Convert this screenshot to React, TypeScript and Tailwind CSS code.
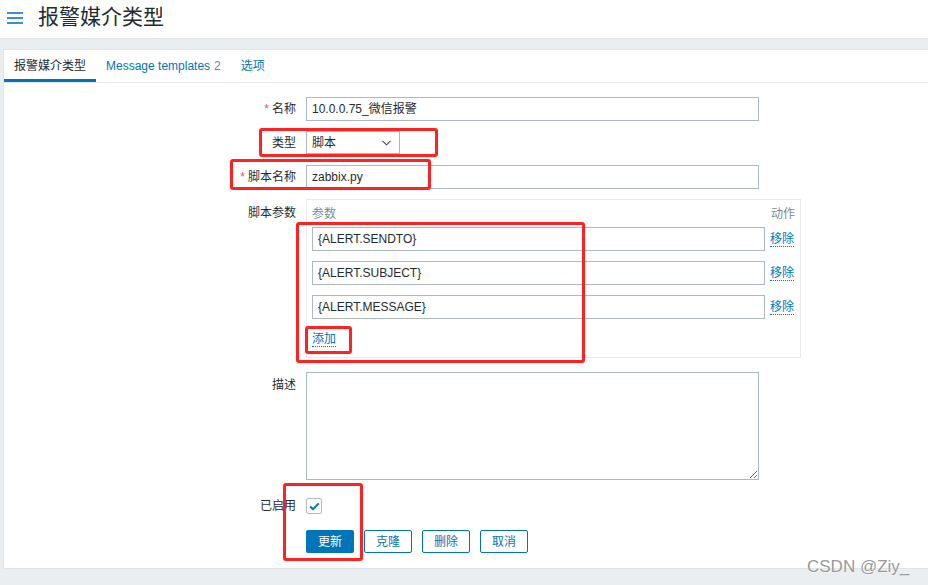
import React from 'react'

const params = ['{ALERT.SENDTO}', '{ALERT.SUBJECT}', '{ALERT.MESSAGE}']

const redBoxes = [
  'left-[259px] top-[128px] w-[179px] h-[29px]',
  'left-[230px] top-[159px] w-[201px] h-[31px]',
  'left-[296px] top-[222px] w-[289px] h-[141px]',
  'left-[305px] top-[326px] w-[47px] h-[28px]',
  'left-[283px] top-[483px] w-[80px] h-[78px]',
]

function Label({ text, required }: { text: string; required?: boolean }) {
  return (
    <div className="w-[302px] shrink-0 pr-[10px] text-right text-[12px] text-[#1f2c33]">
      {required && <span className="mr-[3px] text-[#e45959]">*</span>}
      {text}
    </div>
  )
}

function Input({ value, w = 'w-[453px]' }: { value: string; w?: string }) {
  return (
    <div className={`${w} h-[24px] border border-[#acbbc2] bg-white px-[5px] flex items-center text-[12px] text-[#1f2c33]`}>
      {value}
    </div>
  )
}

export default function App() {
  return (
    <div className="relative w-[928px] h-[585px] overflow-hidden bg-[#ebeef0] font-['Liberation_Sans','Noto_Sans_CJK_SC',sans-serif]">
      {/* header */}
      <div className="h-[39px] bg-white border-b border-[#dfe4e7] flex items-center">
        <svg width="16" height="12" viewBox="0 0 16 12" className="ml-[7px] mt-[-2px]">
          <rect x="0" y="0" width="16" height="2" fill="#3f8fcc" />
          <rect x="0" y="5" width="16" height="2" fill="#3f8fcc" />
          <rect x="0" y="10" width="16" height="2" fill="#3f8fcc" />
        </svg>
        <h1 className="ml-[15px] mt-[-5px] text-[21px] text-[#1f2c33] font-normal">报警媒介类型</h1>
      </div>

      {/* card */}
      <div className="mt-[10px] ml-[3px] h-[520px] bg-white border border-r-0 border-[#dfe4e7]">
        <div className="flex h-[33px] border-b border-[#e3e7ea] text-[12px]">
          <div className="px-[10px] flex items-center border-b-[3px] border-[#0275b8] pt-[2px] text-[#1f2c33]">报警媒介类型</div>
          <div className="px-[10px] flex items-center pb-[1px] text-[#0275b8]">
            Message templates <span className="ml-[4px] text-[#4f8fc0]">2</span>
          </div>
          <div className="px-[10px] flex items-center pb-[1px] text-[#0275b8]">选项</div>
        </div>

        <div className="pt-[14px] flex flex-col">
          <div className="flex items-center">
            <Label text="名称" required />
            <Input value="10.0.0.75_微信报警" />
          </div>

          <div className="flex items-center mt-[10px]">
            <Label text="类型" />
            <div className="w-[94px] h-[23px] border border-[#acbbc2] px-[5px] flex items-center justify-between text-[12px] text-[#1f2c33]">
              脚本
              <svg width="9" height="6" viewBox="0 0 9 6" className="mr-[3px]">
                <path d="M0.5 0.8 L4.5 4.8 L8.5 0.8" fill="none" stroke="#3a4a52" strokeWidth="1.1" />
              </svg>
            </div>
          </div>

          <div className="flex items-center mt-[11px]">
            <Label text="脚本名称" required />
            <Input value="zabbix.py" />
          </div>

          <div className="flex items-start mt-[10px]">
            <div className="pt-[5px]">
              <Label text="脚本参数" />
            </div>
            <div className="w-[495px] h-[159px] border border-[#e6eaec] px-[5px] pt-[4px]">
              <div className="flex justify-between text-[12px] text-[#768d99] h-[20px] items-center">
                <span>参数</span>
                <span>动作</span>
              </div>
              <div className="flex flex-col gap-[10px] mt-[3px]">
                {params.map((p) => (
                  <div key={p} className="flex items-center">
                    <Input value={p} w="w-[453px]" />
                    <span className="ml-[5px] text-[12px] text-[#0275b8] border-b border-dotted border-[#0275b8] leading-[14px]">移除</span>
                  </div>
                ))}
              </div>
              <span className="inline-block mt-[13px] text-[12px] text-[#0275b8] border-b border-dotted border-[#0275b8] leading-[14px]">添加</span>
            </div>
          </div>

          <div className="flex items-start mt-[14px]">
            <div className="pt-[4px]">
              <Label text="描述" />
            </div>
            <textarea readOnly className="w-[453px] h-[108px] border border-[#acbbc2] outline-none" />
          </div>

          <div className="flex items-center mt-[17px]">
            <Label text="已启用" />
            <div className="w-[16px] h-[16px] border border-[#acbbc2] rounded-[2px] flex items-center justify-center">
              <svg width="11" height="9" viewBox="0 0 11 9">
                <path d="M1.2 4.5 L4 7.2 L9.8 1.4" fill="none" stroke="#0275b8" strokeWidth="2" />
              </svg>
            </div>
          </div>

          <div className="flex mt-[15px] ml-[302px] gap-[10px] text-[12px]">
            <div className="w-[48px] h-[23px] rounded-[2px] bg-[#0275b8] text-white flex items-center justify-center">更新</div>
            <div className="w-[48px] h-[23px] rounded-[2px] border border-[#0275b8] text-[#0275b8] flex items-center justify-center">克隆</div>
            <div className="w-[48px] h-[23px] rounded-[2px] border border-[#0275b8] text-[#0275b8] flex items-center justify-center">删除</div>
            <div className="w-[48px] h-[23px] rounded-[2px] border border-[#0275b8] text-[#0275b8] flex items-center justify-center">取消</div>
          </div>
        </div>
      </div>

      {/* annotations */}
      {redBoxes.map((c) => (
        <div key={c} className={`absolute ${c} border-[3px] border-[#ff2222] rounded-[3px]`} />
      ))}

      <div className="absolute left-[807px] top-[554px] text-[17px] text-[#9a9a9a] [text-shadow:0_0_2px_#fff]">CSDN @Ziy_</div>
    </div>
  )
}
